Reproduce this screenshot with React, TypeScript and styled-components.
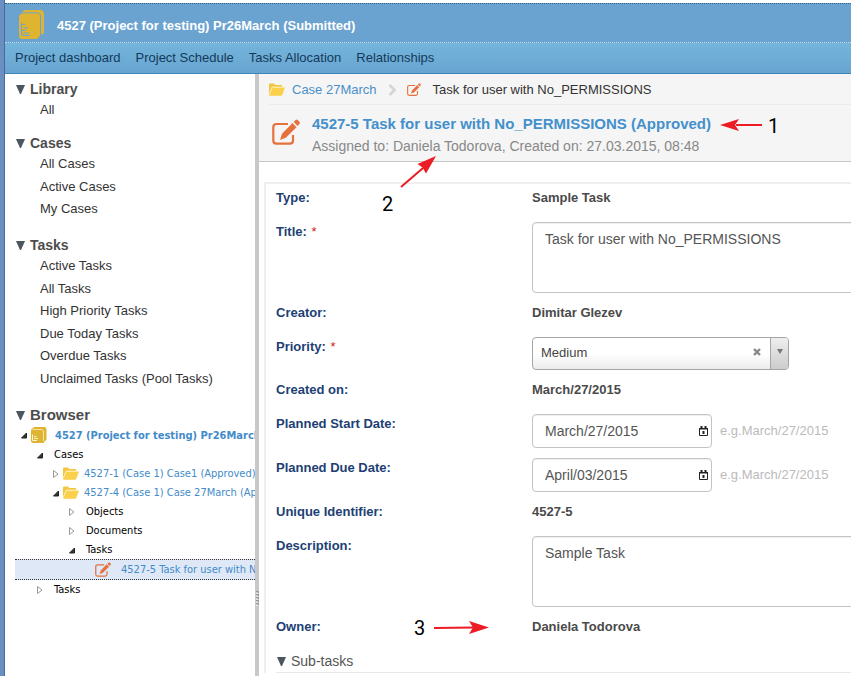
import React from "react";
import styled, { createGlobalStyle } from "styled-components";

const Global = createGlobalStyle`
  * { box-sizing: border-box; }
  body {
    margin: 0;
    background: #fff;
    color: #333;
    font: 13px/20px "Liberation Sans", Arial, sans-serif;
  }
  ul { list-style: none; margin: 0; padding: 0; }
  a { color: inherit; text-decoration: none; }
  button, input, select, textarea { font: inherit; color: inherit; }
  h1, h2, h3, p { margin: 0; font-size: inherit; font-weight: inherit; }
  svg { display: block; flex: none; }
`;

const Frame = styled.div`
  position: relative;
  display: flex;
  flex-direction: column;
  min-height: 100vh;
  padding-top: 3px;
  border-left: 4px solid #6990c0;
  box-shadow: inset 1px 0 #49699a;
  padding-left: 1px;
  overflow: hidden;
`;

const Header = styled.header`
  background: #6ba3d0;
  border-top: 1px dotted #2c5d83;
`;

const ProjectBar = styled.div`
  display: flex;
  align-items: center;
  gap: 13px;
  height: 39px;
  padding: 2px 14px 0;
  border-bottom: 1px dotted #c3dcee;
  h1 { padding-top: 4px; color: #fff; font-weight: bold; }
`;

const Nav = styled.nav`
  display: flex;
  gap: 15px;
  height: 31px;
  padding: 5px 10px 0;
  color: #133a5a;
  background: linear-gradient(#74b5dc, #68a4d0);
  border-bottom: 1px solid #3d86b8;
`;

const Columns = styled.div`
  display: flex;
  flex: 1;
`;

const Sidebar = styled.aside`
  flex: 0 0 250px;
  min-width: 0;
  padding-top: 5px;
  overflow: hidden;
`;

const Splitter = styled.div`
  flex: 0 0 4px;
  display: flex;
  align-items: flex-end;
  justify-content: center;
  padding-bottom: 70px;
  background: #c8c8c8;
`;

const Section = styled.section<{ $gap: number }>`
  margin-bottom: ${(p) => p.$gap}px;
`;

const SectionHead = styled.h2<{ $large?: boolean }>`
  display: flex;
  align-items: center;
  gap: 5px;
  padding-left: 11px;
  color: #4d4d4d;
  font-size: ${(p) => (p.$large ? 15 : 14)}px;
  font-weight: bold;
`;

const Links = styled.ul`
  padding-left: 35px;
  li { line-height: 22px; }
  li:nth-child(even) { line-height: 23px; }
`;

const Tree = styled.ul`
  margin-left: 10px;
  font: 11px/19px "DejaVu Sans Condensed", "DejaVu Sans", sans-serif;
  color: #000;
`;

const TreeRow = styled.li<{ $depth: number; $icon?: "book" | "folder" | "edit" }>`
  display: flex;
  align-items: center;
  height: ${(p) => (p.$icon === "book" ? 20 : p.$icon === "edit" ? 21 : 19)}px;
  padding-left: ${(p) => 5 + p.$depth * 16}px;
  white-space: nowrap;
  font-weight: ${(p) => (p.$icon === "book" ? "bold" : "normal")};
  background: ${(p) => (p.$icon === "edit" ? "#dfe8f6" : "transparent")};
  border: ${(p) => (p.$icon === "edit" ? "1px dotted #333" : "0 solid")};
  border-left: 0;
  border-right: 0;
  gap: ${(p) => (p.$icon === "edit" ? 10 : p.$icon === "folder" ? 5 : 8)}px;
`;

const TreeMark = styled.span`
  display: flex;
  align-items: center;
  flex: none;
  svg + svg { margin-left: 1px; }
`;

const TreeLink = styled.a`
  color: #428bca;
`;

const Main = styled.main`
  flex: 1;
  min-width: 0;
  overflow: hidden;
`;

const TaskHead = styled.div`
  padding-left: 10px;
  background: #f5f5f5;
  border-bottom: 1px solid #c6c6c6;
`;

const Crumbs = styled.nav`
  display: flex;
  align-items: center;
  height: 31px;
  padding-top: 1px;
  border-bottom: 1px solid #ececec;
  > * + * { margin-left: 7px; }
  > a + svg { margin-left: 10px; }
  > svg + svg { margin-left: 11px; }
  > span { margin-left: 12px; }
`;

const TitleRow = styled.div`
  display: flex;
  align-items: center;
  gap: 12px;
  height: 56px;
  padding-left: 3px;
`;

const TitleText = styled.div`
  padding-top: 4px;
  line-height: 22px;
  h1 { color: #4390cc; font-size: 15px; font-weight: bold; }
  p { color: #888; font-size: 14px; }
`;

const BlueLink = styled.a`
  color: #4b8fc9;
`;

const Panel = styled.div`
  margin: 20px -24px 0 5px;
  padding: 4px 0 0 10px;
  border: solid #efefef;
  border-width: 2px 0 0 2px;
`;

const Form = styled.form`
  display: flex;
  flex-direction: column;
`;

const Field = styled.div<{ $control?: boolean }>`
  display: grid;
  grid-template-columns: 256px 1fr;
  margin-bottom: ${(p) => (p.$control ? 10 : 14)}px;
`;

const Label = styled.label`
  color: #213f74;
  font-weight: bold;
`;

const Required = styled.span`
  margin-left: 1px;
  color: #c22;
  font-weight: normal;
`;

const Value = styled.output`
  color: #4a4a4a;
  font-weight: bold;
`;

const TextArea = styled.textarea`
  display: block;
  width: 100%;
  height: 71px;
  padding: 6px 12px;
  border: 1px solid #c4c4c4;
  border-radius: 4px;
  box-shadow: inset 0 1px 1px #eee;
  background: #fff;
  color: #555;
  font-size: 14px;
  resize: none;
`;

const Combo = styled.div`
  display: flex;
  width: 257px;
  height: 33px;
  overflow: hidden;
  border: 1px solid #a5a5a5;
  border-radius: 4px;
  background: linear-gradient(#fff 50%, #ececec);
  select {
    flex: 1;
    min-width: 0;
    padding: 0 8px 2px;
    border: 0;
    background: none;
    appearance: none;
    color: #444;
  }
`;

const ComboButton = styled.button<{ $arrow?: boolean }>`
  display: flex;
  align-items: center;
  justify-content: center;
  width: ${(p) => (p.$arrow ? 18 : 26)}px;
  padding: 0 0 4px;
  border: solid #a5a5a5;
  border-width: 0 0 0 ${(p) => (p.$arrow ? 1 : 0)}px;
  background: ${(p) => (p.$arrow ? "linear-gradient(#eee, #ccc)" : "none")};
`;

const DateLine = styled.div`
  display: flex;
  align-items: center;
  gap: 8px;
  color: #bbb;
`;

const DateBox = styled.div`
  display: flex;
  align-items: center;
  width: 180px;
  height: 34px;
  border: 1px solid #c4c4c4;
  border-radius: 4px;
  box-shadow: inset 0 1px 1px #eee;
  input {
    flex: 1;
    min-width: 0;
    padding: 0 12px;
    border: 0;
    background: none;
    color: #555;
    font-size: 14px;
  }
  button { padding: 0 3px 0 0; border: 0; background: none; }
`;

const SubTasks = styled.h2`
  display: flex;
  align-items: center;
  gap: 5px;
  height: 23px;
  margin-top: -1px;
  padding-left: 1px;
  border-bottom: 1px solid #e8e8e8;
  color: #555;
  font-size: 14px;
`;

const Note = styled.div<{ $x: number; $y: number }>`
  position: absolute;
  left: ${(p) => p.$x}px;
  top: ${(p) => p.$y}px;
  color: #000;
  font: 20px/20px Roboto, sans-serif;
`;

const Arrows = styled.svg`
  position: absolute;
  inset: 0 auto auto -4px;
  pointer-events: none;
`;

const BookIcon = ({ cut }: { cut: string }) => (
  <svg width="25" height="29" viewBox="0 0 25 29" aria-hidden="true">
    <path d="M0 6 4 1.200Q5 0 7 0h14q4 0 4 4v18q0 2.500-3 2.500L18 29H3q-3 0-3-3z" fill="#dfb431" />
    <path d="M3 3.800Q4 2.800 5.500 2.800H18.500q3 0 3 3V25" fill="none" stroke={cut} strokeWidth="1" />
    <path d="M2.500 13v12h2M2.500 14.500h3.500M4.500 18h4.500M2.500 20.500h4M4.500 23h5.500M4 25.500h7" fill="none" stroke={cut} strokeWidth="1" />
  </svg>
);

const SmallBookIcon = () => (
  <svg width="16" height="16" viewBox="0 0 16 16" aria-hidden="true">
    <path d="M0 3 2 .8Q3 0 4 0h9q2.500 0 2.500 2.500V12q0 1.500-1.500 2l-1.500 2H2q-2 0-2-2z" fill="#dfb431" />
    <path d="M1.500 2.500H10q2.500 0 2.500 2.500v9" fill="none" stroke="#f4e3a6" strokeWidth="1" />
    <path d="M1.500 7.500v6H6M3 9.500h2.500M3 11.500h4" fill="none" stroke="#fbf3d3" strokeWidth="1" />
  </svg>
);

const FolderIcon = () => (
  <svg width="16" height="13" viewBox="0 0 16 13" aria-hidden="true">
    <path d="M0 11V1.500Q0 .5 1 .5h4l1.200 1.500H12q1.300 0 1.300 1.300V4H4.500L2.500 5z" fill="#f3c63f" />
    <path d="M0 12 3 4.500h13L13.200 12q-.3.800-1.200.800H1q-1 0-1-.8z" fill="#fbd04b" />
    <path d="M.8 10.500 3.200 4h12" fill="none" stroke="#fff1bd" strokeWidth=".7" />
  </svg>
);

const EditIcon = ({ size }: { size: number }) => (
  <svg width={size} height={size} viewBox="0 0 28 28" fill="#e6713d" aria-hidden="true">
    <path d="M16 5H4.500Q1.300 5 1.300 8.200V21.500Q1.300 24.700 4.500 24.700h13.300Q21 24.700 21 21.500V16" fill="none" stroke="#e6713d" strokeWidth="2.200" />
    <path d="m20.500 4 4 4.300L13.800 18.800 8 21l2-6.200z" />
    <path d="m21.700 2.900 1.900-1.800q1.100-1 2.200 0l1.600 1.700q1 1.100 0 2.200l-1.800 1.900z" />
  </svg>
);

const DownTriangle = () => (
  <svg width="9" height="9" viewBox="0 0 9 9" aria-hidden="true">
    <path d="M0 0h9L5 9H4z" fill="#4c565e" />
  </svg>
);

const TreeArrow = ({ state }: { state: "open" | "closed" | "none" }) => (
  <svg width="10" height="10" viewBox="0 0 10 10" aria-hidden="true">
    {state === "open" && <path d="M6.500 3v5h-5z" fill="#333" stroke="#222" />}
    {state === "closed" && <path d="M1.500 1.500v7L6 5z" fill="#fff" stroke="#999" />}
  </svg>
);

const CalendarIcon = () => (
  <svg width="9" height="10" viewBox="0 0 9 10" aria-hidden="true">
    <path d="M.5 2.500h8v7h-8z" fill="#fff" stroke="#222" />
    <path d="M0 2h9v1.500H0zM1.500 0h2v2h-2zM5.500 0h2v2h-2zM3.500 5h2v3h-2z" fill="#222" />
  </svg>
);

const sections = [
  { title: "Library", gap: 12, links: ["All"] },
  { title: "Cases", gap: 15, links: ["All Cases", "Active Cases", "My Cases"] },
  {
    title: "Tasks",
    gap: 15,
    links: ["Active Tasks", "All Tasks", "High Priority Tasks", "Due Today Tasks", "Overdue Tasks", "Unclaimed Tasks (Pool Tasks)"],
  },
];

type Node = { depth: number; text: string; state: "open" | "closed" | "none"; icon?: "book" | "folder" | "edit" };
const nodes: Node[] = [
  { depth: 0, text: "4527 (Project for testing) Pr26March (Submitted)", state: "open", icon: "book" },
  { depth: 1, text: "Cases", state: "open" },
  { depth: 2, text: "4527-1 (Case 1) Case1 (Approved)", state: "closed", icon: "folder" },
  { depth: 2, text: "4527-4 (Case 1) Case 27March (Approved)", state: "open", icon: "folder" },
  { depth: 3, text: "Objects", state: "closed" },
  { depth: 3, text: "Documents", state: "closed" },
  { depth: 3, text: "Tasks", state: "open" },
  { depth: 4, text: "4527-5 Task for user with No_PERMISSIONS", state: "none", icon: "edit" },
  { depth: 1, text: "Tasks", state: "closed" },
];

const ReadOnly = ({ id, label, value }: { id: string; label: string; value: string }) => (
  <Field>
    <Label htmlFor={id}>{label}</Label>
    <Value id={id}>{value}</Value>
  </Field>
);

const DateField = ({ id, label, value }: { id: string; label: string; value: string }) => (
  <Field $control>
    <Label htmlFor={id}>{label}</Label>
    <DateLine>
      <DateBox>
        <input id={id} defaultValue={value} />
        <button type="button" aria-label="Open calendar"><CalendarIcon /></button>
      </DateBox>
      <span>e.g.March/27/2015</span>
    </DateLine>
  </Field>
);

export default function App() {
  return (
    <Frame>
      <Global />
      <Header>
        <ProjectBar>
          <BookIcon cut="#6ba3d0" />
          <h1>4527 (Project for testing) Pr26March (Submitted)</h1>
        </ProjectBar>
        <Nav>
          {["Project dashboard", "Project Schedule", "Tasks Allocation", "Relationships"].map((t) => (
            <a href="#" key={t}>{t}</a>
          ))}
        </Nav>
      </Header>
      <Columns>
        <Sidebar>
          {sections.map((s) => (
            <Section key={s.title} $gap={s.gap}>
              <SectionHead><DownTriangle />{s.title}</SectionHead>
              <Links>
                {s.links.map((l) => <li key={l}><a href="#">{l}</a></li>)}
              </Links>
            </Section>
          ))}
          <SectionHead $large><DownTriangle />Browser</SectionHead>
          <Tree>
            {nodes.map((n, i) => (
              <TreeRow key={i} $depth={n.depth} $icon={n.icon}>
                <TreeMark>
                  <TreeArrow state={n.state} />
                  {n.icon === "book" && <SmallBookIcon />}
                  {n.icon === "folder" && <FolderIcon />}
                  {n.icon === "edit" && <EditIcon size={16} />}
                </TreeMark>
                {n.icon ? <TreeLink href="#">{n.text}</TreeLink> : <span>{n.text}</span>}
              </TreeRow>
            ))}
          </Tree>
        </Sidebar>
        <Splitter>
          <svg width="3" height="15" viewBox="0 0 3 15" aria-hidden="true">
            <path d="M0 1h3M0 4h3M0 7h3M0 10h3M0 13h3" stroke="#666" />
            <path d="M0 2h2M0 5h2M0 8h2M0 11h2M0 14h2" stroke="#fff" />
          </svg>
        </Splitter>
        <Main>
          <TaskHead>
            <Crumbs>
              <FolderIcon />
              <BlueLink href="#">Case 27March</BlueLink>
              <svg width="9" height="12" viewBox="0 0 9 12" aria-hidden="true">
                <path d="m2.500 1 5 5-5 5" fill="none" stroke="#d5d5d5" strokeWidth="2.800" />
              </svg>
              <EditIcon size={14} />
              <span>Task for user with No_PERMISSIONS</span>
            </Crumbs>
            <TitleRow>
              <EditIcon size={28} />
              <TitleText>
                <h1>4527-5 Task for user with No_PERMISSIONS (Approved)</h1>
                <p>Assigned to: Daniela Todorova, Created on: 27.03.2015, 08:48</p>
              </TitleText>
            </TitleRow>
          </TaskHead>
          <Panel>
            <Form>
              <ReadOnly id="type" label="Type:" value="Sample Task" />
              <Field $control>
                <Label htmlFor="title">Title: <Required>*</Required></Label>
                <TextArea id="title" defaultValue="Task for user with No_PERMISSIONS" />
              </Field>
              <ReadOnly id="creator" label="Creator:" value="Dimitar Glezev" />
              <Field $control>
                <Label htmlFor="priority">Priority: <Required>*</Required></Label>
                <Combo>
                  <select id="priority" defaultValue="Medium"><option>Medium</option></select>
                  <ComboButton type="button" aria-label="Clear priority">
                    <svg width="8" height="8" viewBox="0 0 8 8" aria-hidden="true">
                      <path d="m1 1 6 6M7 1 1 7" stroke="#888" strokeWidth="2.400" />
                    </svg>
                  </ComboButton>
                  <ComboButton type="button" aria-label="Show priorities" $arrow>
                    <svg width="6" height="5" viewBox="0 0 6 5" aria-hidden="true"><path d="M0 0h6L3 5z" fill="#777" /></svg>
                  </ComboButton>
                </Combo>
              </Field>
              <ReadOnly id="created" label="Created on:" value="March/27/2015" />
              <DateField id="start" label="Planned Start Date:" value="March/27/2015" />
              <DateField id="due" label="Planned Due Date:" value="April/03/2015" />
              <ReadOnly id="uid" label="Unique Identifier:" value="4527-5" />
              <Field $control>
                <Label htmlFor="description">Description:</Label>
                <TextArea id="description" defaultValue="Sample Task" />
              </Field>
              <ReadOnly id="owner" label="Owner:" value="Daniela Todorova" />
            </Form>
            <SubTasks><DownTriangle />Sub-tasks</SubTasks>
          </Panel>
        </Main>
      </Columns>
      <Arrows width="851" height="676" viewBox="0 0 851 676" fill="#ed1c24" stroke="#ed1c24" strokeWidth="2" aria-hidden="true">
        <path d="M736 125h26M401 187l22-19M434 628l40-.5" />
        <path stroke="none" d="m720 125 19-6-4 6 4 6zM436 156l-18.500 8 5 3.500 3.500 6zM489 627.500l-20-6.500 4 6.500-4 6.500z" />
      </Arrows>
      <Note $x={764} $y={116}>1</Note>
      <Note $x={378} $y={194}>2</Note>
      <Note $x={410} $y={618}>3</Note>
    </Frame>
  );
}
